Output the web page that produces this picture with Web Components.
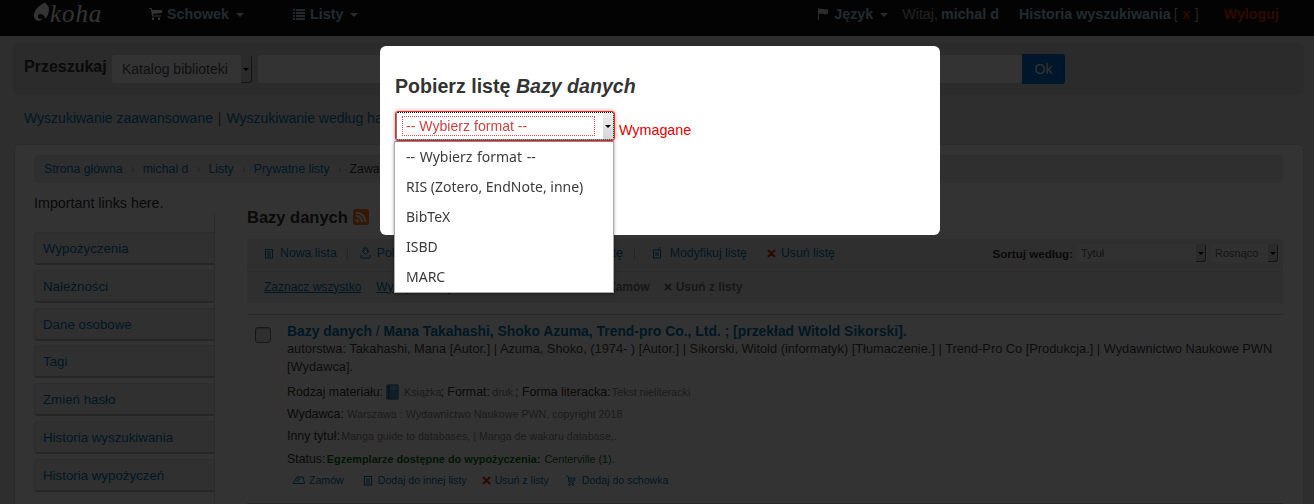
<!DOCTYPE html>
<html lang="pl"><head><meta charset="utf-8"><title>Koha</title>
<style>
html,body{margin:0;padding:0;height:504px;overflow:hidden;background:#e6e6e6;font-family:"Liberation Sans",Arial,sans-serif;font-size:12px;color:#333}
</style></head><body>
<koha-navbar></koha-navbar>
<koha-search></koha-search>
<koha-more></koha-more>
<koha-main>
  <koha-crumbs></koha-crumbs>
  <koha-sidebar slot="side"></koha-sidebar>
  <koha-toolbar slot="content"></koha-toolbar>
  <koha-result slot="content"></koha-result>
</koha-main>
<koha-backdrop></koha-backdrop>
<koha-modal></koha-modal>
<script>
const def=(name,html)=>customElements.define(name,class extends HTMLElement{constructor(){super();this.attachShadow({mode:'open'}).innerHTML=html}});
const L='#0076b2';
const R='#e03010';
const ic={
cart:(c)=>`<svg width="14" height="14" viewBox="0 0 14 14" fill="${c}"><path d="M0 1h2.500l.5 2h10.500l-.6 1.500-.2 1.600-9 .9.3 1.500H12v1H3.200L1.800 2H0z"/><rect x="3" y="10.500" width="2" height="2.500"/><rect x="9" y="10.500" width="2" height="2.500"/></svg>`,
list:(c)=>`<svg width="14" height="14" viewBox="0 0 14 14" fill="${c}"><path d="M1 2h2v2H1zM4 2h9v2H4zM1 5h2v2H1zM4 5h9v2H4zM1 8h2v2H1zM4 8h9v2H4zM1 11h2v2H1zM4 11h9v2H4z"/></svg>`,
flag:(c)=>`<svg width="12" height="14" viewBox="0 0 12 14" fill="${c}"><path d="M1 1h1v12H1zM2 2c3-1 5 1 9 0v5c-4 1-6-1-9 0z"/></svg>`,
doc:(c)=>`<svg width="10" height="11" viewBox="0 0 10 11" fill="none" stroke="${c}"><rect x="1.500" y="1.500" width="7" height="8.500"/><path d="M3 4h4M3 6h4M3 8h4"/></svg>`,
dl:(c)=>`<svg width="11" height="12" viewBox="0 0 11 12" fill="none" stroke="${c}"><path d="M4 1h3v3h2L5.500 7.500 2 4h2zM1 8v3h9V8"/></svg>`,
edit:(c)=>`<svg width="10" height="12" viewBox="0 0 10 12" fill="none" stroke="${c}"><rect x="1.500" y="3" width="7" height="8"/><path d="M3 6h4M3 8h4M6 3l2-3"/></svg>`,
x:(c,s=9)=>`<svg width="${s}" height="${s}" viewBox="0 0 9 9" fill="none" stroke="${c}" stroke-width="2.200"><path d="M1 1l7 7M8 1l-7 7"/></svg>`,
hold:(c)=>`<svg width="13" height="9" viewBox="0 0 13 9" fill="none" stroke="${c}"><path d="M1 7.500L5 1h6l1.500 6.500zM4 5h3M5 3h3"/></svg>`,
mini:(c)=>`<svg width="10" height="11" viewBox="0 0 10 11" fill="none" stroke="${c}"><path d="M0 1h2l1 6h5M2 3h7l-.5 3M3 5h5"/><circle cx="3.500" cy="9.500" r="1"/><circle cx="7" cy="9.500" r="1"/></svg>`,
book:`<svg width="13" height="16" viewBox="0 0 13 16" style="margin:0 5px 0 3px;flex:none"><rect x=".5" y=".5" width="12" height="15" rx="1.500" fill="#4a90c8" stroke="#8a9aa8"/><rect x="2" y="1" width="1.500" height="14" fill="#2a6a9c"/><path d="M4.500 3h6.500M4.500 5h6.500" stroke="#b8d8f0"/></svg>`
};
const NAV='#a8d0e8';
const tri=`<span style="display:inline-block;border:4px solid transparent;border-top-color:#d8d8d8;border-bottom:0;margin-left:2px;margin-top:1px"></span>`;

def('koha-backdrop',`<style>:host{display:block;position:fixed;inset:0;background:rgba(0,0,0,.8)}</style>`);

def('koha-navbar',`<style>
:host{display:flex;align-items:center;height:36px;background:#101010;font-size:14.300px;color:#aaa;box-sizing:border-box;padding-bottom:8px}
.logo{margin-left:33px;width:116px;display:flex;align-items:center;color:#fff;font:italic 25px "Liberation Serif",serif;letter-spacing:.9px;flex:none}
.it{display:flex;align-items:center;gap:5px;font-weight:bold;color:${NAV};flex:none;white-space:nowrap}
.sp{flex:1}.nb{font-weight:normal;color:#aaa}
</style>
<div class="logo"><svg width="18" height="20" viewBox="0 0 18 19" style="margin-top:-4px"><path fill="#fff" d="M12 0C8 2 1 6 1 13c0 4 3 6 6 5 1-.3 2-1 2-2-2 1-4 0-4-2s2-3 4-2c2 .8 3 2 3 4 2-1 4-5 4-9 0-3-2-5-4-7z"/></svg><span style="margin-left:-1px">koha</span></div>
<div class="it" style="margin-right:48px">${ic.cart('#fff')}<span style="margin-left:-1px">Schowek</span>${tri}</div>
<div class="it">${ic.list(NAV)}<span style="margin-left:-1px">Listy</span>${tri}</div>
<div class="sp"></div>
<div class="it" style="margin-right:14px">${ic.flag('#ddd')}<span>Język</span>${tri}</div>
<div class="it" style="margin-right:20px;gap:3px"><span class="nb">Witaj,</span><span>michal d</span></div>
<div class="it" style="margin-right:25px;gap:3px"><span>Historia wyszukiwania</span><span class="nb">[</span><span style="color:${R};margin:0 1.500px">x</span><span class="nb">]</span></div>
<div class="it" style="margin-right:35px;color:${R}">Wyloguj</div>`);

def('koha-search',`<style>
:host{display:flex;align-items:center;margin:7px 10px 0 13px;height:52px;background:#d4d4d4;border-radius:6px;padding:0 239px 0 11px;box-sizing:border-box}
b{font-size:16px;color:#333;width:88px;flex:none;margin-top:-5px;white-space:nowrap}
.sel{width:140px;height:28px;background:#fff;border-radius:3px 0 0 3px;box-sizing:border-box;display:flex;align-items:center;padding-left:10px;font-size:14px;color:#555;position:relative;flex:none}
.sel i{position:absolute;right:0;top:0;bottom:0;width:10px;background:#d4d4d4;border-right:1px solid #666;border-bottom:1px solid #666;border-radius:0 3px 3px 0}
.sel i::after{content:"";position:absolute;left:2px;top:13px;border:3px solid transparent;border-top-color:#000;border-bottom:0}
.inp{flex:1;height:28px;background:#fff;margin-left:6px;border-radius:3px 0 0 3px}
.ok{width:43px;height:30px;background:#0070d0;border-radius:0 3px 3px 0;color:#fff;font-size:14px;display:flex;align-items:center;justify-content:center;flex:none}
</style><b>Przeszukaj</b><div class="sel">Katalog biblioteki<i></i></div><div class="inp"></div><div class="ok">Ok</div>`);

def('koha-more',`<style>
:host{display:block;margin:13px 0 0 24px;height:20px;line-height:20px;font-size:14px;color:${L};white-space:nowrap}
span{color:#555;margin:0 1px}
</style>Wyszukiwanie zaawansowane <span>|</span> Wyszukiwanie według ha`);

def('koha-main',`<style>
:host{display:block;margin:16px 10px 0 14px;background:#fff;border:1px solid #d8d8d8;border-bottom:0;border-radius:6px 6px 0 0;height:360px;overflow:hidden;box-sizing:border-box;padding:10px 20px 0 19px}
.cols{display:flex}
.side{width:181px;flex:none;margin-right:32px}
.content{flex:1;min-width:0;margin-top:24px}
</style><slot></slot><div class="cols"><div class="side"><slot name="side"></slot></div><div class="content"><slot name="content"></slot></div></div>`);

def('koha-crumbs',`<style>
:host{display:flex;align-items:center;height:28px;background:#ececec;border-radius:4px;padding-left:10px;padding-bottom:1px;box-sizing:border-box;font-size:12.300px;color:${L};white-space:nowrap}
span{display:inline-block}i{font-style:normal;color:#aaa;width:20px;text-align:center;display:inline-block}
</style><span>Strona główna</span><i>›</i><span>michal d</span><i>›</i><span>Listy</span><i>›</i><span>Prywatne listy</span><i>›</i><span style="color:#333">Zawartość listy</span>`);

def('koha-sidebar',`<style>
:host{display:block;font-size:13.300px;color:${L}}
p{margin:11px 0 0;height:19px;line-height:19px;font-size:14.300px;color:#333}
nav{border-right:1px solid #d6d6d6;padding-top:19px;display:flex;flex-direction:column;gap:4.800px;height:290px;box-sizing:border-box}
a{display:block;height:33px;line-height:32px;box-sizing:border-box;padding-left:8px;background:#f0f0f0;border-radius:4px 0 0 4px;border:1px solid #e0e0e0;border-bottom:2px solid #bcbcbc;border-right:0;flex:none;white-space:nowrap}
</style><p>Important links here.</p><nav><a>Wypożyczenia</a><a>Należności</a><a>Dane osobowe</a><a>Tagi</a><a>Zmień hasło</a><a>Historia wyszukiwania</a><a>Historia wypożyczeń</a></nav>`);

def('koha-toolbar',`<style>
:host{display:block}
h1{margin:0 0 12px;height:20px;font-size:16.500px;line-height:20px;color:#333;display:flex;align-items:center;gap:5px;white-space:nowrap}
.t1{height:32px;background:#ececec;display:flex;align-items:center;padding-left:17px;font-size:12.300px;color:${L};white-space:nowrap;border-radius:3px 3px 0 0;box-sizing:border-box;padding-bottom:4px}
.t2{height:32px;background:#ececec;border-top:1px solid #d4d4d4;box-sizing:border-box;display:flex;align-items:center;padding-left:17px;padding-bottom:2px;font-size:12px;white-space:nowrap;color:#777;font-weight:bold}
.g{display:inline-flex;align-items:center;gap:6px}
.sep{width:1px;height:13px;background:#bbb}
u{font-weight:normal;color:${L}}
.sort{margin-left:auto;display:flex;align-items:center;font-size:11.600px;font-weight:bold;color:#333;padding-right:5px}
.s{height:18px;background:#f2f2f2;border-radius:3px;position:relative;font-weight:normal;font-size:11px;color:#666;line-height:18px;padding-left:4px;box-sizing:border-box}
.s i{position:absolute;right:0;top:0;bottom:0;width:9px;border-right:1px solid #666;border-bottom:1px solid #666;border-radius:0 3px 3px 0;background:#d8d8d8}
.s i::after{content:"";position:absolute;left:2px;top:8px;border:3px solid transparent;border-top-color:#000;border-bottom:0}
svg{flex:none}
</style><h1>Bazy danych <svg width="16" height="16" viewBox="0 0 16 16"><rect width="16" height="16" rx="2.500" fill="#ff7a10"/><circle cx="4.300" cy="11.700" r="1.700" fill="#fff"/><path d="M3 7a6 6 0 0 1 6 6M3 3.500A9.500 9.500 0 0 1 12.500 13" fill="none" stroke="#fff" stroke-width="2"/></svg></h1>
<div class="t1"><span class="g">${ic.doc(L)}Nowa lista</span><span class="sep" style="margin:0 12px 0 10px"></span><span class="g" style="width:263px;justify-content:space-between"><span class="g">${ic.dl(L)}Pobierz listę</span><span>Wyślij listę</span></span><span class="sep" style="margin:0 17px 0 11px"></span><span class="g" style="gap:8px">${ic.edit(L)}Modyfikuj listę</span><span class="g" style="margin-left:20px;gap:5px">${ic.x(R)}Usuń listę</span>
<span class="sort">Sortuj według:<span class="s" style="width:129px;margin-left:4px">Tytuł<i></i></span><span class="s" style="width:67px;margin-left:5px;padding-left:4px">Rosnąco<i></i></span></span></div>
<div class="t2"><u>Zaznacz wszystko</u><u style="margin-left:15px;width:180px">Wyczyść wszystko</u><span style="margin-left:52px">Zamów</span><span class="g" style="margin-left:14px;gap:4px">${ic.x('#666',8)}Usuń z listy</span></div>`);

def('koha-result',`<style>
:host{display:flex;margin-top:11px;border-top:1px solid #c6c6c6;padding-top:7px;border-bottom:1px solid #c6c6c6;height:190px;box-sizing:border-box}
.cb{width:16px;height:16px;box-sizing:border-box;border:1px solid #777;background:#e6e6e6;border-radius:3px;margin:5px 16px 0 8px;flex:none;box-shadow:inset 0 1px 1px #bbb}
.b{flex:1;min-width:0}
h2{margin:0;font-size:13.900px;line-height:18px;color:${L};font-weight:bold;white-space:nowrap}
h2 span{font-weight:normal}
.a{font-size:12.800px;line-height:18px;color:#444}
.m{font-size:12.350px;line-height:14px;color:#333;white-space:nowrap;height:14px;display:flex;align-items:center}
small{font-size:10.700px;color:#888;white-space:pre}
.act{display:flex;align-items:center;font-size:10.600px;color:${L};margin-top:6px;height:16px;margin-left:5px;white-space:nowrap}
.act span{display:inline-flex;align-items:center;gap:5px}
</style><div class="cb"></div><div class="b">
<h2>Bazy danych <span>/</span> Mana Takahashi, Shoko Azuma, Trend-pro Co., Ltd. ; [przekład Witold Sikorski].</h2>
<div class="a">autorstwa: Takahashi, Mana [Autor.] | Azuma, Shoko, (1974- ) [Autor.] | Sikorski, Witold (informatyk) [Tłumaczenie.] | Trend-Pro Co [Produkcja.] | Wydawnictwo Naukowe PWN [Wydawca].</div>
<div class="m" style="margin-top:8px;height:16px">Rodzaj materiału:${ic.book}<small>Książka</small><span style="margin-left:-1px">; Format:&nbsp;</span><small style="margin-left:-1px">druk </small><span style="margin-left:-1px">; Forma literacka:&nbsp;</span><small style="margin-left:-2px">Tekst nieliteracki</small></div>
<div class="m" style="margin-top:7px">Wydawca:&nbsp;<small>Warszawa : Wydawnictwo Naukowe PWN, copyright 2018</small></div>
<div class="m" style="margin-top:8px">Inny tytuł:&nbsp;<small style="margin-left:-2px">Manga guide to databases, | Manga de wakaru database,.</small></div>
<div class="m" style="margin-top:9px">Status:&nbsp;<b style="font-size:10.900px;color:#0a700a;margin-left:-2px">Egzemplarze dostępne do wypożyczenia:</b><span style="font-size:10.800px;color:#0a700a;margin-left:1px">&nbsp;Centerville (1).</span></div>
<div class="act"><span style="margin-right:19px;gap:4px">${ic.hold(L)}Zamów</span><span style="margin-right:15px">${ic.doc(L)}Dodaj do innej listy</span><span style="margin-right:17px;gap:4px">${ic.x(R)}Usuń z listy</span><span style="gap:6px">${ic.mini(L)}Dodaj do schowka</span></div>
</div>`);

def('koha-select',`<style>
:host{display:block;position:relative;width:220px;height:30px;font:14px "Noto Sans",sans-serif}
.box{position:absolute;inset:0;border:1px solid #e22;border-radius:3px;box-shadow:0 0 4px rgba(230,40,40,.45);background:#fff;box-sizing:border-box}
.box::before{content:"";position:absolute;inset:0;border:1px dotted #000;border-radius:2px}
.txt{position:absolute;left:6px;top:4px;width:193px;height:20px;border:1px dotted #e05050;box-sizing:border-box;color:#c44;padding-left:3px;white-space:nowrap;font:14.100px/18px "Liberation Sans",sans-serif}
.ar{position:absolute;right:1px;top:1px;bottom:1px;width:10px;background:linear-gradient(#eee,#d6d6d6)}
.ar::after{content:"";position:absolute;left:2px;top:12px;border:3px solid transparent;border-top-color:#000;border-bottom:0}
.list{position:absolute;left:-1px;top:30px;width:220px;height:152px;box-sizing:border-box;background:#fff;border:1px solid #aaa;border-top-color:#888;box-shadow:0 1px 3px rgba(0,0,0,.4);padding:0;color:#3b3b3b;z-index:2}
.o{height:30px;line-height:30px;padding-left:11px;white-space:nowrap}
</style><div class="box"><div class="txt">-- Wybierz format --</div><div class="ar"></div></div>
<div class="list"><div class="o" style="word-spacing:1px">-- Wybierz format --</div><div class="o">RIS (Zotero, EndNote, inne)</div><div class="o">BibTeX</div><div class="o">ISBD</div><div class="o">MARC</div></div>`);

def('koha-modal',`<style>
:host{display:block;position:fixed;left:380px;top:46px;width:560px;height:189px;background:#fff;border-radius:6px;box-sizing:border-box;padding:27px 15px 0}
h3{margin:0;font-size:19.600px;line-height:26px;color:#333;font-weight:bold;white-space:nowrap}
em{font-style:italic}
.row{display:flex;align-items:center;margin-top:12px;height:30px}
.req{color:#d00;font-size:14.300px;margin-left:4px;margin-top:7px;white-space:nowrap}
</style><h3>Pobierz listę <em>Bazy danych</em></h3><div class="row"><koha-select></koha-select><span class="req">Wymagane</span></div>`);
</script>
</body></html>
